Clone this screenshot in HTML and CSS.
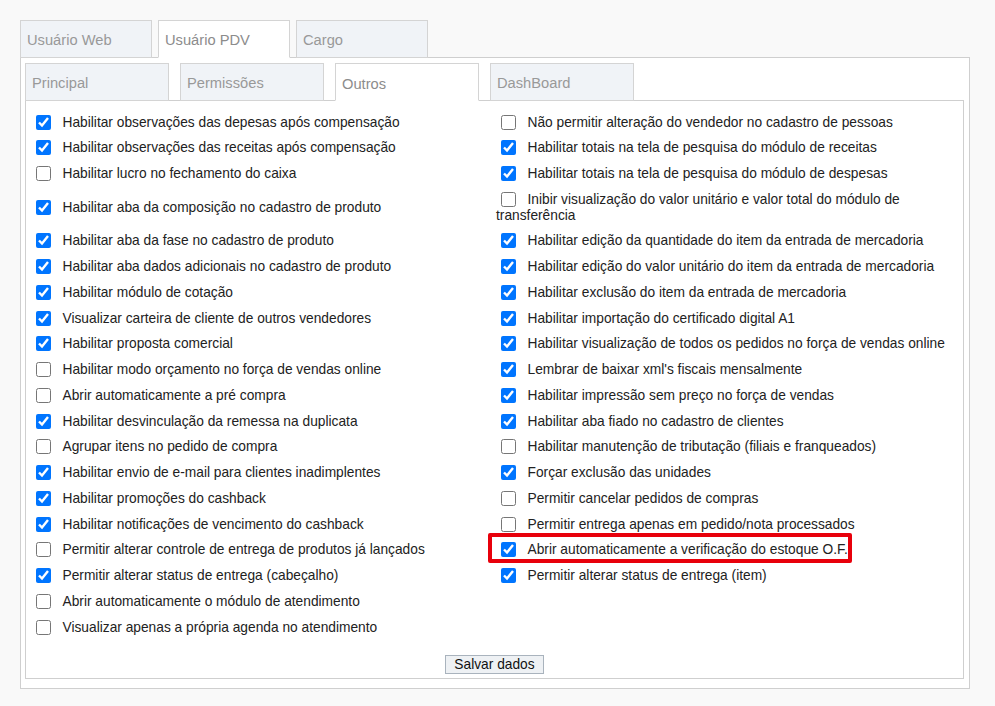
FILE: index.html
```html
<!DOCTYPE html>
<html lang="pt-BR">
<head>
<meta charset="utf-8">
<title>Usuário PDV - Outros</title>
<link rel="stylesheet" href="styles.css">
</head>
<body>
<div class="page">
  <div class="tabs tabs-outer">
    <div class="tab">Usuário Web</div>
    <div class="tab active">Usuário PDV</div>
    <div class="tab">Cargo</div>
  </div>
  <div class="panel-outer">
    <div class="tabs tabs-inner">
      <div class="tab">Principal</div>
      <div class="tab">Permissões</div>
      <div class="tab active">Outros</div>
      <div class="tab">DashBoard</div>
    </div>
    <div class="panel-inner">
      <div class="opts">
        <label class="opt"><input type="checkbox" checked>Habilitar observações das depesas após compensação</label>
        <label class="opt"><input type="checkbox">Não permitir alteração do vendedor no cadastro de pessoas</label>
        <label class="opt"><input type="checkbox" checked>Habilitar observações das receitas após compensação</label>
        <label class="opt"><input type="checkbox" checked>Habilitar totais na tela de pesquisa do módulo de receitas</label>
        <label class="opt"><input type="checkbox">Habilitar lucro no fechamento do caixa</label>
        <label class="opt"><input type="checkbox" checked>Habilitar totais na tela de pesquisa do módulo de despesas</label>
        <label class="opt"><input type="checkbox" checked>Habilitar aba da composição no cadastro de produto</label>
        <label class="opt"><input type="checkbox">Inibir visualização do valor unitário e valor total do módulo de transferência</label>
        <label class="opt"><input type="checkbox" checked>Habilitar aba da fase no cadastro de produto</label>
        <label class="opt"><input type="checkbox" checked>Habilitar edição da quantidade do item da entrada de mercadoria</label>
        <label class="opt"><input type="checkbox" checked>Habilitar aba dados adicionais no cadastro de produto</label>
        <label class="opt"><input type="checkbox" checked>Habilitar edição do valor unitário do item da entrada de mercadoria</label>
        <label class="opt"><input type="checkbox" checked>Habilitar módulo de cotação</label>
        <label class="opt"><input type="checkbox" checked>Habilitar exclusão do item da entrada de mercadoria</label>
        <label class="opt"><input type="checkbox" checked>Visualizar carteira de cliente de outros vendedores</label>
        <label class="opt"><input type="checkbox" checked>Habilitar importação do certificado digital A1</label>
        <label class="opt"><input type="checkbox" checked>Habilitar proposta comercial</label>
        <label class="opt"><input type="checkbox" checked>Habilitar visualização de todos os pedidos no força de vendas online</label>
        <label class="opt"><input type="checkbox">Habilitar modo orçamento no força de vendas online</label>
        <label class="opt"><input type="checkbox" checked>Lembrar de baixar xml's fiscais mensalmente</label>
        <label class="opt"><input type="checkbox">Abrir automaticamente a pré compra</label>
        <label class="opt"><input type="checkbox" checked>Habilitar impressão sem preço no força de vendas</label>
        <label class="opt"><input type="checkbox" checked>Habilitar desvinculação da remessa na duplicata</label>
        <label class="opt"><input type="checkbox" checked>Habilitar aba fiado no cadastro de clientes</label>
        <label class="opt"><input type="checkbox">Agrupar itens no pedido de compra</label>
        <label class="opt"><input type="checkbox">Habilitar manutenção de tributação (filiais e franqueados)</label>
        <label class="opt"><input type="checkbox" checked>Habilitar envio de e-mail para clientes inadimplentes</label>
        <label class="opt"><input type="checkbox" checked>Forçar exclusão das unidades</label>
        <label class="opt"><input type="checkbox" checked>Habilitar promoções do cashback</label>
        <label class="opt"><input type="checkbox">Permitir cancelar pedidos de compras</label>
        <label class="opt"><input type="checkbox" checked>Habilitar notificações de vencimento do cashback</label>
        <label class="opt"><input type="checkbox">Permitir entrega apenas em pedido/nota processados</label>
        <label class="opt"><input type="checkbox">Permitir alterar controle de entrega de produtos já lançados</label>
        <label class="opt highlighted"><input type="checkbox" checked>Abrir automaticamente a verificação do estoque O.F.<span class="mark"></span></label>
        <label class="opt"><input type="checkbox" checked>Permitir alterar status de entrega (cabeçalho)</label>
        <label class="opt"><input type="checkbox" checked>Permitir alterar status de entrega (item)</label>
        <label class="opt"><input type="checkbox">Abrir automaticamente o módulo de atendimento</label>
        <div class="opt"></div>
        <label class="opt"><input type="checkbox">Visualizar apenas a própria agenda no atendimento</label>
        <div class="opt"></div>
      </div>
      <div class="actions">
        <button class="btn" type="button">Salvar dados</button>
      </div>
    </div>
  </div>
</div>
</body>
</html>
```

FILE: styles.css
```css
* {
  box-sizing: border-box;
}

html, body {
  margin: 0;
  padding: 0;
  background: #f9f9f9;
  font-family: "Liberation Sans", Arial, sans-serif;
  color: #222;
}

.page {
  padding: 20px 0 0 20px;
}

.tabs {
  display: flex;
  position: relative;
  z-index: 1;
  margin-bottom: -1px;
}

.tabs-outer {
  gap: 6px;
}

.tabs-inner {
  gap: 11px;
}

.tab {
  height: 38px;
  border: 1px solid #d4d4d4;
  background: #f0f3f7;
  color: #999;
  font-size: 14.7px;
  line-height: 34px;
  padding: 2px 0 0 6px;
  white-space: nowrap;
}

.tabs-outer .tab {
  width: 132px;
}

.tabs-inner .tab {
  width: 144px;
}

.tab.active {
  background: #fff;
  border-bottom-color: #fff;
  color: #8c8c8c;
}

.tabs-inner .tab.active {
  padding-top: 3px;
}

.panel-outer {
  width: 950px;
  height: 632px;
  border: 1px solid #cfcfcf;
  background: #fff;
  padding: 5px 5px 10px 4px;
}

.panel-inner {
  width: 939px;
  height: 579px;
  border: 1px solid #cfcfcf;
  background: #fff;
  padding: 8.5px 5px 0 5px;
}

.opts {
  display: grid;
  grid-template-columns: 465px 1fr;
  align-items: center;
}

.opt {
  display: block;
  position: relative;
  min-height: 25.75px;
  padding: 5px 0;
  font-size: 13.75px;
  line-height: 15.75px;
  color: #222;
}

.opt input {
  width: 15px;
  height: 15px;
  margin: 0 12px 0 4.5px;
  vertical-align: top;
}

.mark {
  position: absolute;
  left: -8px;
  top: -4px;
  width: 364px;
  height: 30px;
  border: 4px solid #e8000b;
  border-radius: 2px;
  pointer-events: none;
}

.actions {
  text-align: center;
  margin-top: 15px;
}

.btn {
  width: 99px;
  height: 19px;
  padding: 0;
  border: 1px solid #a9b3bd;
  border-radius: 0;
  background: #eef1f4;
  font-family: "Liberation Sans", Arial, sans-serif;
  font-size: 13.75px;
  line-height: 17px;
  color: #111;
}
```
